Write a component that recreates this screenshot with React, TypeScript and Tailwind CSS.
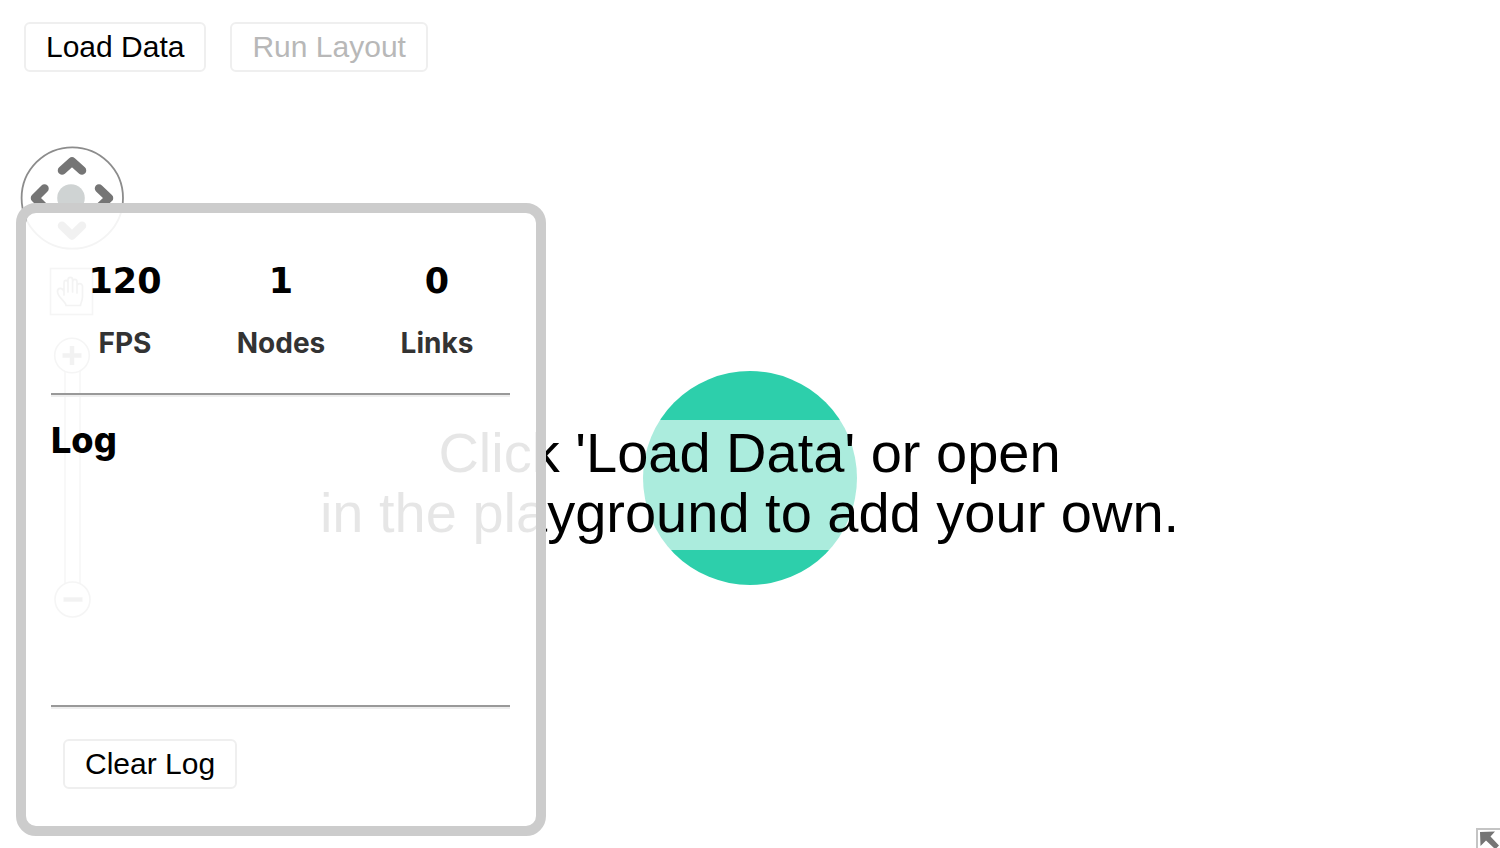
import type { ReactNode } from 'react'

const stats = [
  { label: 'FPS', value: '120' },
  { label: 'Nodes', value: '1' },
  { label: 'Links', value: '0' },
]

function Button({ children, disabled }: { children: ReactNode; disabled?: boolean }) {
  return (
    <button
      disabled={disabled}
      className="h-[50px] rounded-md border-2 border-[#efefef] bg-white px-5 text-[30px] leading-[44px] whitespace-nowrap text-black disabled:text-[#b8b8b8]"
    >
      {children}
    </button>
  )
}

// pan wheel, drag toggle and zoom slider
function Navigation() {
  return (
    <svg className="absolute top-[140px] left-4" width="112" height="484" viewBox="16 140 112 484" fill="none">
      <circle cx="72.3" cy="198" r="50.7" fill="#fff" stroke="#8c8c8c" strokeWidth="1.8" />
      <circle cx="71" cy="198" r="13.8" fill="#cfd3d3" />
      <g stroke="#757575" strokeWidth="8.5" strokeLinecap="round" strokeLinejoin="round">
        <path d="M62 170.5 72 161.5 82 170.5" />
        <path d="M62 225.8 72 235.5 82 225.8" />
        <path d="M44.5 188.5 35 198 44.5 207.5" />
        <path d="M99 188.500 109 198 99 207.500" />
      </g>
      <rect x="50.5" y="268.5" width="42" height="46" fill="#fff" stroke="#999" strokeWidth="1.6" />
      <path
        d="M64 295V283c0-3.400 4-3.400 4 0v-3c0-3.400 4.600-3.400 4.600 0v2c0-3.400 4.400-3.400 4.400 0v4c0-3 5.500-3.600 5.500.5v10c0 5-2 6-2 9H66c0-4-8.500-8-8.500-14 0-4 5-4.500 6.500 0M68 283v9M72.600 282v10M77 285v8"
        stroke="#8a8a8a"
        strokeWidth="1.7"
        strokeLinecap="round"
        strokeLinejoin="round"
      />
      <rect x="65" y="367" width="15" height="220" fill="#fff" stroke="#a0a0a0" strokeWidth="1.5" />
      <circle cx="72" cy="355.5" r="17.3" fill="#fff" stroke="#999" strokeWidth="1.6" />
      <path d="M62.5 355.5h19M72 346v19" stroke="#808080" strokeWidth="4.5" />
      <circle cx="72.5" cy="599.5" r="17.5" fill="#fff" stroke="#999" strokeWidth="1.6" />
      <path d="M63.5 599.5h19" stroke="#808080" strokeWidth="4.5" />
    </svg>
  )
}

function Rule() {
  return <hr className="h-1 w-[459px] border-t-2 border-b-2 border-t-[#999] border-b-[#eee]" />
}

function Panel() {
  return (
    <section className="absolute top-[203px] left-4 flex h-[633px] w-[530px] flex-col rounded-[20px] border-[10px] border-[#ccc] bg-white/90 bg-clip-padding px-[25px]">
      <div className="mt-[46px] flex w-[468px] -translate-x-1">
        {stats.map((s) => (
          <div key={s.label} className="flex w-[156px] flex-col items-center">
            <span className="font-['DejaVu_Sans',sans-serif] text-[35px] leading-[44px] font-bold text-black">
              {s.value}
            </span>
            <span className="mt-5 font-[Inter,sans-serif] text-[28px] leading-[40px] font-bold text-[#333]">
              {s.label}
            </span>
          </div>
        ))}
      </div>
      <div className="mt-[30px]">
        <Rule />
      </div>
      <h2 className="mt-[18px] h-[52px] font-[Inter,sans-serif] text-[36px] leading-[50px] font-extrabold text-black">
        Log
      </h2>
      <div className="h-[238px] overflow-auto" />
      <Rule />
      <div className="mt-[30px] ml-3">
        <Button>Clear Log</Button>
      </div>
    </section>
  )
}

function Diagram() {
  return (
    <main className="relative flex flex-1 justify-center">
      <div className="mt-[299px] flex size-[214px] justify-center rounded-full bg-[#2dcfab]">
        <p className="mt-[48.5px] h-[130px] shrink-0 bg-white/60 pt-[3px] pr-px text-center text-[56px] leading-[60.5px] whitespace-nowrap text-black">
          Click 'Load Data' or open
          <br />
          in the playground to add your own.
        </p>
      </div>
    </main>
  )
}

function App() {
  return (
    <div className="relative flex h-[848px] w-[1500px] flex-col overflow-hidden bg-white font-['Liberation_Sans',Arial,sans-serif]">
      <header className="flex h-[72px] gap-6 pt-[22px] pl-6">
        <Button>Load Data</Button>
        <Button disabled>Run Layout</Button>
      </header>
      <Diagram />
      <Navigation />
      <Panel />
      {/* overview toggle */}
      <svg className="absolute right-0 bottom-0" width="24" height="20" viewBox="0 0 24 20" fill="none">
        <path d="M1 20V1h23" stroke="#c4c4c4" strokeWidth="2" />
        <path d="M4 4 19 3.500 14.500 8.500 23 17.500 20.500 20H18L10 12.500 4.500 18z" fill="#757575" />
      </svg>
    </div>
  )
}

export default App
